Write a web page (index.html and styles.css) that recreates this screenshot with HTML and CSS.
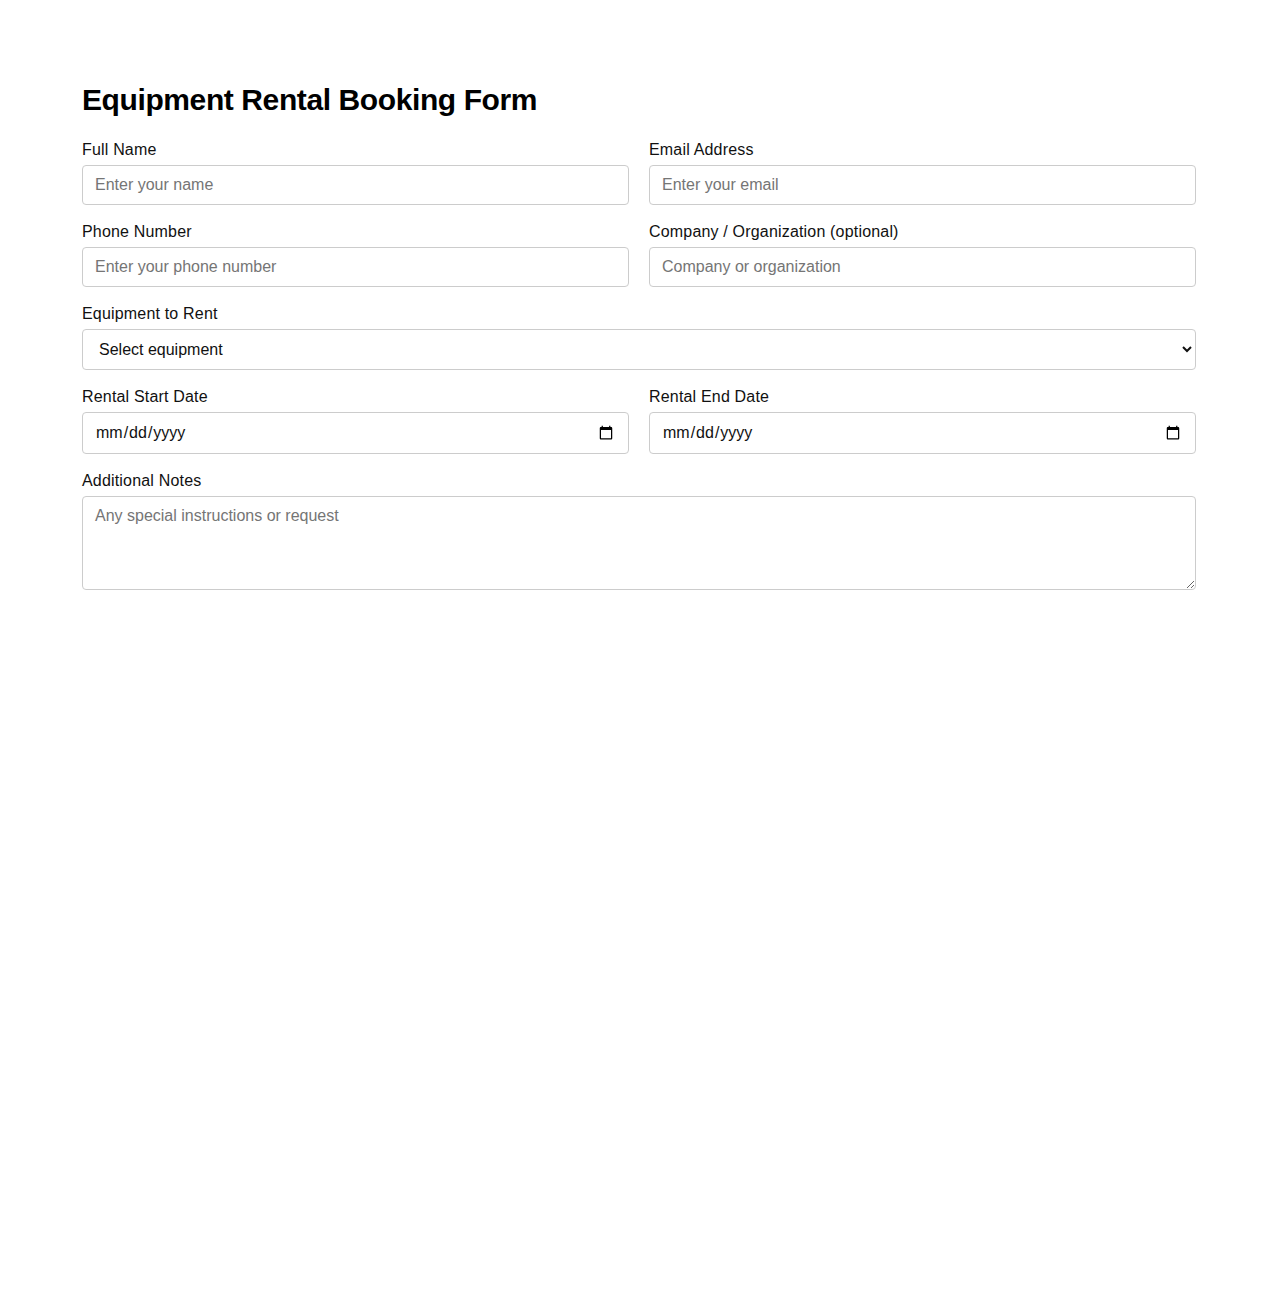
FILE: index.html
```html
<!DOCTYPE html>
<html lang="en">
<head>
<meta charset="utf-8">
<title>Equipment Rental Booking Form</title>
<link rel="stylesheet" href="styles.css">
</head>
<body>
<div class="container">
  <h1 class="title">Equipment Rental Booking Form</h1>
  <form class="form">
    <div class="row">
      <div class="group">
        <label class="label" for="name">Full Name</label>
        <input class="field" id="name" type="text" placeholder="Enter your name">
      </div>
      <div class="group">
        <label class="label" for="email">Email Address</label>
        <input class="field" id="email" type="email" placeholder="Enter your email">
      </div>
    </div>
    <div class="row">
      <div class="group">
        <label class="label" for="phone">Phone Number</label>
        <input class="field" id="phone" type="tel" placeholder="Enter your phone number">
      </div>
      <div class="group">
        <label class="label" for="company">Company / Organization (optional)</label>
        <input class="field" id="company" type="text" placeholder="Company or organization">
      </div>
    </div>
    <div class="group">
      <label class="label" for="equipment">Equipment to Rent</label>
      <select class="field select" id="equipment">
        <option>Select equipment</option>
        <option>Excavator</option>
        <option>Forklift</option>
        <option>Generator</option>
      </select>
    </div>
    <div class="row">
      <div class="group">
        <label class="label" for="start">Rental Start Date</label>
        <input class="field" id="start" type="date">
      </div>
      <div class="group">
        <label class="label" for="end">Rental End Date</label>
        <input class="field" id="end" type="date">
      </div>
    </div>
    <div class="group">
      <label class="label" for="notes">Additional Notes</label>
      <textarea class="field notes" id="notes" placeholder="Any special instructions or request"></textarea>
    </div>
  </form>
</div>
</body>
</html>
```

FILE: styles.css
```css
html, body {
  margin: 0;
  padding: 0;
  background: #ffffff;
}

body {
  font-family: "Liberation Sans", Arial, sans-serif;
  color: #111;
}

.container {
  width: 1114px;
  margin: 0 auto;
  padding-top: 83px;
}

.title {
  font-size: 30px;
  font-weight: bold;
  letter-spacing: -0.4px;
  margin: 0 0 24px 0;
  color: #000;
}

.form {
  display: flex;
  flex-direction: column;
  gap: 18px;
}

.row {
  display: grid;
  grid-template-columns: 1fr 1fr;
  column-gap: 20px;
}

.group {
  display: flex;
  flex-direction: column;
}

.label {
  display: block;
  font-size: 16px;
  letter-spacing: 0.18px;
  margin-bottom: 6px;
  color: #111;
}

.field {
  box-sizing: border-box;
  width: 100%;
  font-family: "Liberation Sans", Arial, sans-serif;
  font-size: 16px;
  padding: 10px 12px;
  border: 1px solid #cccccc;
  border-radius: 4px;
  background: #ffffff;
  color: #111;
  margin: 0;
}

.field::placeholder {
  color: #757575;
}

.select {
  height: 41px;
}

.notes {
  height: 94px;
  resize: both;
  display: block;
}
```
